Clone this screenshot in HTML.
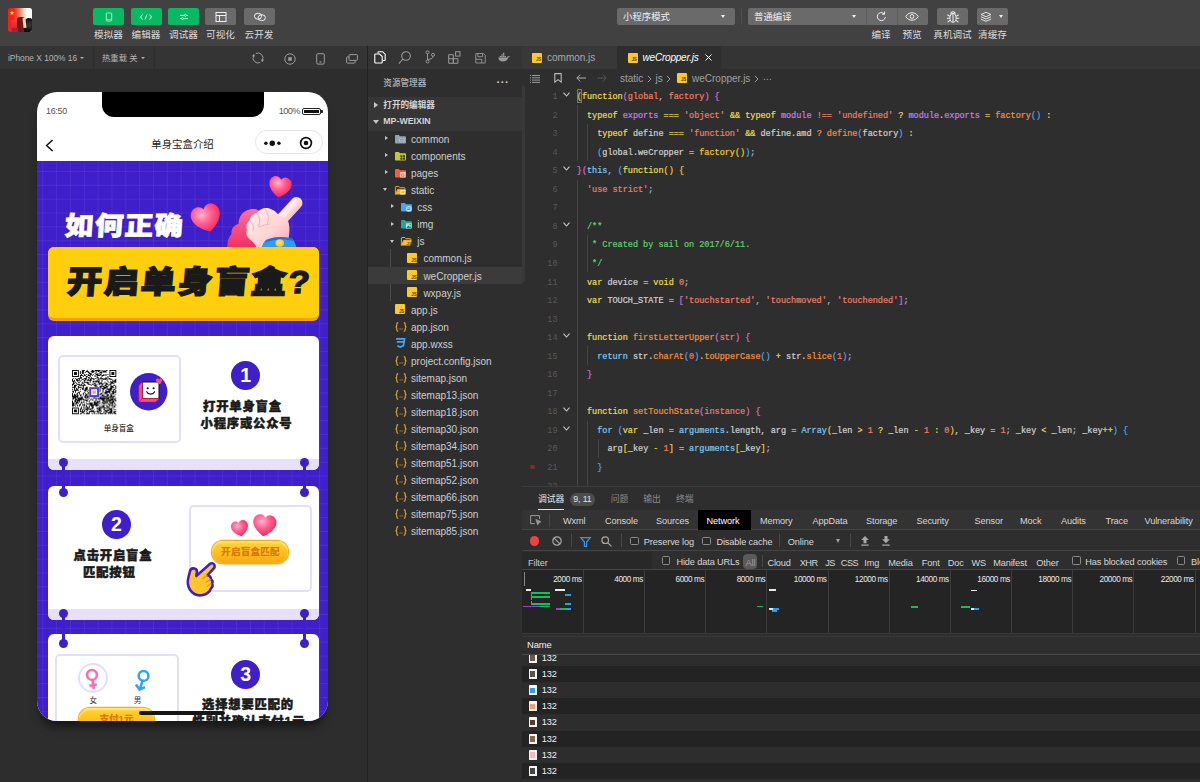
<!DOCTYPE html>
<html lang="zh-CN">
<head>
<meta charset="utf-8">
<title>微信开发者工具</title>
<style>
*{box-sizing:border-box;margin:0;padding:0}
html,body{width:1200px;height:782px;overflow:hidden;background:#2e2e2e}
body{position:relative;font-family:"Liberation Sans","Noto Sans CJK SC",sans-serif;color:#ccc;font-size:10px;-webkit-font-smoothing:antialiased}
.abs{position:absolute}
svg{display:block;overflow:visible}
/* ---------- top toolbar ---------- */
#top{left:0;top:0;width:1200px;height:46px;background:#414141}
.tb{position:absolute;top:8px;height:17px;width:31px;border-radius:2px;background:#09b863}
.tb.g{background:#6a6a6a}
.tb svg{position:absolute;left:50%;top:50%;transform:translate(-50%,-50%)}
.tl{position:absolute;top:28px;width:60px;margin-left:-30px;text-align:center;font-size:9.6px;line-height:13px;color:#dcdcdc;white-space:nowrap}
.sel{position:absolute;top:8px;height:17px;background:#6a6a6a;border-radius:2px;color:#f0f0f0;font-size:9.4px;line-height:17px;padding-left:6px}
.sel i{position:absolute;right:10px;top:7px;border:2.5px solid transparent;border-top:3px solid #eee;border-bottom:0}
/* ---------- simulator ---------- */
#simbar{left:0;top:46px;width:367px;height:23px;background:#343434}
#simbody{left:0;top:69px;width:367px;height:713px;background:#2d2d2d}
#vsplit{left:367px;top:46px;width:1px;height:736px;background:#222}
.st{position:absolute;top:.6px;height:23px;line-height:23px;font-size:8.350px;color:#b4b4b4;white-space:nowrap}
.st i{display:inline-block;vertical-align:middle;margin-left:3px;margin-top:-1px;border:2px solid transparent;border-top:2.800px solid #b4b4b4;border-bottom:0}

/* ---------- phone ---------- */
#phone{left:37px;top:92px;width:291px;height:628.600px;border-radius:20px;background:#fff;overflow:hidden;box-shadow:0 9px 10px -3px rgba(0,0,0,.5)}
#phone .cj{font-family:"Liberation Sans","Noto Sans CJK SC",sans-serif}
#poster{left:0;top:68.500px;width:291px;height:560px;background-color:#3f1fc9;background-image:linear-gradient(90deg,rgba(120,100,235,.2) 1px,transparent 1px),linear-gradient(180deg,rgba(120,100,235,.2) 1px,transparent 1px);background-size:13.850px 13.850px;background-position:5.250px 10px;overflow:hidden}
.hv{font-family:"Liberation Sans","Noto Sans CJK SC",sans-serif;font-weight:900;white-space:nowrap;position:absolute;line-height:1}
.card{position:absolute;left:11.400px;width:270.400px;height:134px;background:#fff;border-radius:6px;overflow:hidden}
.card:after{content:"";position:absolute;left:0;right:0;bottom:0;height:11px;background:#e6e0fb}
.frame{position:absolute;border:2.600px solid #e4defc;border-radius:5px;background:#fff}
.num{position:absolute;width:29px;height:29px;border-radius:50%;background:#3f1fc9;color:#fff;text-align:center;font:900 19.500px/29px "Liberation Sans","Noto Sans CJK SC",sans-serif}
.pin{position:absolute;width:9px;height:9px;border-radius:50%;background:#3f1fc9}
.pinl{position:absolute;width:3px;background:#3f1fc9}
.ybtn{position:absolute;border-radius:13px;background:linear-gradient(180deg,#ffd23c 0%,#ffc31f 45%,#f8a915 100%);box-shadow:0 0 0 1.200px #f7ad1c,0 1.500px 2px rgba(245,166,35,.55),inset 0 2px 1.500px rgba(255,236,140,.8);color:#d9780f;text-align:center}
/* ---------- explorer ---------- */
#actbar{left:368px;top:46px;width:154px;height:23px;background:#343434}
#explorer{left:368px;top:69px;width:154px;height:713px;background:#2e2e2e}

.row{position:absolute;left:0;width:154px;height:17.040px;line-height:17.040px;font-size:10px;color:#cfcfcf;white-space:nowrap}
.row .tw{position:absolute;top:6px;width:0;height:0}
.tw.r{border:2.800px solid transparent;border-left:3.900px solid #c5c5c5;border-right:0;margin-top:-.2px}
.tw.d{border:2.800px solid transparent;border-top:3.900px solid #c5c5c5;border-bottom:0;top:6.800px!important;margin-left:-.2px}
.row .ic{position:absolute;top:4px}
.row .tx{position:absolute;top:.7px}
.jsi{position:absolute;width:10px;height:10px;background:#ffca28;border-radius:1px}
.jsi:after{content:"JS";position:absolute;right:.8px;bottom:.6px;font:700 4.600px/5px "Liberation Sans",sans-serif;color:#5a4500;letter-spacing:-.2px}
.jsn{position:absolute;font:700 9px/10px "Liberation Mono",monospace;color:#f9a825;letter-spacing:-1.500px;white-space:nowrap}
.hdr{position:absolute;left:0;width:154px;height:17px;background:#363636;font-size:8.600px;font-weight:700;color:#d4d4d4;line-height:17px}
/* ---------- editor ---------- */
#tabs{left:522px;top:46px;width:678px;height:23px;background:#343434}
#editor{left:522px;top:69px;width:678px;height:417px;background:#2e2e2e;overflow:hidden}

.tab{position:absolute;top:0;height:23px;font-size:10px;line-height:22px;white-space:nowrap}
.bc{position:absolute;top:3.700px;font-size:10px;line-height:12px;color:#a0a0a0;white-space:nowrap}
.ln{position:absolute;left:0;width:35.500px;text-align:right;font:8.510px/18.550px "Liberation Mono",monospace;color:#585858;margin-top:1.300px}
.cl{-webkit-text-stroke:.22px;margin-top:1.300px;position:absolute;left:54.800px;white-space:pre;font:8.510px/18.550px "Liberation Mono",monospace;color:#d4d4d4;height:18.550px}
.cv{position:absolute;left:40.500px;width:7px;height:5px}
.ig{position:absolute;width:1px;background:#444}
.y{color:#e8dc50}.o{color:#d8c840}.s{color:#f07c60}.p{color:#c77dea}.b{color:#5fb4f0}.g{color:#d0d0d0}.f{color:#f2903e}.t{color:#7cc8f4}.c{color:#5fd068}.by{color:#f0c830}.bp{color:#d070d8}.bb{color:#4aa8f0}.sc{color:#9fb4c8}
/* ---------- debugger ---------- */
#dbg{left:522px;top:486px;width:678px;height:296px;background:#2e2e2e;overflow:hidden;border-top:1px solid #3c3c3c}
#dbg .t{position:absolute;white-space:nowrap;font-size:9.200px;line-height:12px;color:#d8d8d8;letter-spacing:-.12px}
#dbg .cb{position:absolute;width:8.500px;height:8.500px;border:1px solid #8a8a8a;border-radius:1.500px;background:#2a2a2a}
#dbg .vd{position:absolute;width:1px;background:#484848}
.nr{position:absolute;left:0;width:678px;height:16.150px}
.nr i{position:absolute;left:6.500px;top:3px;width:8px;height:10px;background:#f4f4f4;border-radius:.5px}
.nr i:after{content:"";position:absolute;left:1.500px;top:2.500px;width:5px;height:5.500px;background:var(--c,#555)}
.nr span{position:absolute;left:19.800px;top:2px;font-size:9.200px;line-height:12px;color:#f0f0f0;letter-spacing:-.1px}
.bar{position:absolute;height:1.900px;margin-top:-.25px}
</style>
</head>
<body>
<!-- TOP TOOLBAR -->
<div id="top" class="abs">
  <div id="avatar" class="abs" style="left:8px;top:8px;width:24px;height:23.500px;border-radius:2.500px;overflow:hidden;background:#f0221c">
    <div class="abs" style="left:0;top:0;width:24px;height:24px;background:linear-gradient(90deg,rgba(240,34,28,0) 22%,rgba(236,120,90,.9) 45%,#e8c8a8 62%,#ffffff 78%)"></div>
    <div class="abs" style="left:3px;top:12px;width:10px;height:12px;background:linear-gradient(180deg,rgba(248,60,50,.9),rgba(200,30,40,.95))"></div>
    <div class="abs" style="left:8.500px;top:9px;width:8px;height:15px;background:#6e1a18;border-radius:3px 3px 0 0"></div>
    <div class="abs" style="left:3.500px;top:20px;width:6px;height:4px;background:#b0202a"></div>
    <div class="abs" style="left:16px;top:9.500px;width:9px;height:15px;background:radial-gradient(circle at 60% 45%,#3a3a3a 0,#0c0c0c 70%);border-radius:5px 4px 0 0"></div>
    <div class="abs" style="left:15px;top:10px;width:2.500px;height:10px;background:#ead9b8;transform:rotate(-6deg)"></div>
    <div class="abs" style="left:1.500px;top:1.500px;font-size:5px;line-height:5px;color:#f8d838">&#9733;</div>
  </div>
  <!-- left buttons -->
  <div class="tb" style="left:93px"><svg width="7" height="9.300" viewBox="0 0 9 12" fill="none" stroke="#d6f5e3" stroke-width="1"><rect x="1" y="0.8" width="7" height="10.4" rx="1"/><path d="M1 9.2h7" stroke-width=".7"/></svg></div>
  <div class="tb" style="left:130.600px"><svg width="13" height="7" viewBox="0 0 13 7" fill="none" stroke="#d6f5e3" stroke-width="1"><path d="M3 1L1 3.5 3 6M10 1l2 2.5L10 6M7.5 1l-2 5"/></svg></div>
  <div class="tb" style="left:168px"><svg width="8.500" height="7.200" viewBox="0 0 10 9" fill="none" stroke="#d6f5e3" stroke-width="1"><path d="M0 2.5h5.5M8 2.5h2M0 6.5h2M4.5 6.5H10"/><circle cx="6.7" cy="2.5" r="1.2"/><circle cx="3.2" cy="6.5" r="1.2"/></svg></div>
  <div class="tb g" style="left:205px"><svg width="11" height="10" viewBox="0 0 11 10" fill="none" stroke="#f0f0f0" stroke-width="1"><rect x=".5" y=".5" width="10" height="9"/><path d="M.5 3.5h10M4 3.5v6"/></svg></div>
  <div class="tb g" style="left:244px"><svg width="13" height="9" viewBox="0 0 13 9" fill="none" stroke="#f0f0f0" stroke-width="1"><ellipse cx="4.5" cy="3.7" rx="3.6" ry="3"/><ellipse cx="8.3" cy="5.2" rx="3.6" ry="3"/></svg></div>
  <div class="tl" style="left:108.5px">模拟器</div>
  <div class="tl" style="left:146px">编辑器</div>
  <div class="tl" style="left:183.5px">调试器</div>
  <div class="tl" style="left:220.5px">可视化</div>
  <div class="tl" style="left:259px">云开发</div>
  <!-- center selects -->
  <div class="sel" style="left:617px;width:118px">小程序模式<i></i></div>
  <div class="abs" style="left:741px;top:9px;width:1px;height:16px;background:#4e4e4e"></div>
  <div class="sel" style="left:748px;width:180px">普通编译<i style="right:72.500px"></i>
    <div class="abs" style="left:118px;top:0;width:1px;height:17px;background:#5e5e5e"></div>
    <div class="abs" style="left:149px;top:0;width:1px;height:17px;background:#5e5e5e"></div>
    <svg class="abs" style="left:128px;top:3px" width="11" height="11" viewBox="0 0 11 11" fill="none" stroke="#f0f0f0" stroke-width="1"><path d="M9.3 6.2A4 4 0 1 1 8 2.6"/><path d="M8.6 .6v2.6H6" /></svg>
    <svg class="abs" style="left:157px;top:4px" width="14" height="9" viewBox="0 0 14 9" fill="none" stroke="#f0f0f0" stroke-width="1"><path d="M.8 4.5C2.5 1.8 4.6.8 7 .8s4.5 1 6.2 3.7C11.500 7.200 9.400 8.200 7 8.200S2.500 7.200.8 4.500z"/><circle cx="7" cy="4.500" r="1.900"/></svg>
  </div>
  <div class="tb g" style="left:937px"><svg width="14.500" height="13.400" viewBox="0 0 13 12" fill="none" stroke="#f0f0f0" stroke-width=".9"><ellipse cx="6.5" cy="6.800" rx="2.800" ry="3.900"/><path d="M4.600 3.300a1.900 1.900 0 0 1 3.800 0M6.500 3.300v7.400M3.700 5.500L1.500 4M3.700 7.200H1M3.800 9l-2.200 1.600M9.300 5.500L11.500 4M9.300 7.200H12M9.200 9l2.200 1.600"/></svg></div>
  <div class="tb g" style="left:977px"><svg class="abs" style="left:9px!important;top:8.5px!important" width="12" height="11" viewBox="0 0 12 11" fill="none" stroke="#f0f0f0" stroke-width=".9"><path d="M6 .8L11 3 6 5.200 1 3z"/><path d="M1 5.300l5 2.200 5-2.200M1 7.600l5 2.200 5-2.200"/></svg><i class="abs" style="right:5.200px;top:7.300px;border:2.500px solid transparent;border-top:3px solid #eee;border-bottom:0"></i></div>
  <div class="tl" style="left:881px">编译</div>
  <div class="tl" style="left:912px">预览</div>
  <div class="tl" style="left:952.5px">真机调试</div>
  <div class="tl" style="left:992.5px">清缓存</div>
</div>
<!-- SIMULATOR -->
<div id="simbar" class="abs">
  <div class="st" style="left:8px">iPhone X 100% 16<i></i></div>
  <div class="abs" style="left:93px;top:0;width:1px;height:23px;background:#2c2c2c"></div>
  <div class="st" style="left:102px">热重载 关<i></i></div>
  <div class="abs" style="left:154px;top:0;width:1px;height:23px;background:#2c2c2c"></div>
  <svg class="abs" style="left:252.400px;top:6.300px" width="12" height="12" viewBox="0 0 12 12" fill="none" stroke="#9c9c9c" stroke-width="1"><path d="M3.890 1.470A5 5 0 0 1 10.530 8.110M8.110 10.530A5 5 0 0 1 1.470 3.890"/><path d="M8.800 7.400l3.200.4-1.800 2.500zM3.200 4.600L0 4.200l1.800-2.500z" fill="#9c9c9c" stroke="none"/></svg>
  <svg class="abs" style="left:283.500px;top:6.700px" width="12" height="12" viewBox="0 0 12 12" fill="none" stroke="#9c9c9c" stroke-width="1"><circle cx="6" cy="6" r="5.200"/><rect x="4.200" y="4.200" width="3.600" height="3.600" fill="#9c9c9c" stroke="none"/></svg>
  <svg class="abs" style="left:316px;top:6.500px" width="9" height="12" viewBox="0 0 9 12" fill="none" stroke="#9c9c9c" stroke-width="1"><rect x=".7" y=".7" width="7.600" height="10.400" rx="1.200"/><path d="M3.500 9h2" stroke-width="1.200"/></svg>
  <svg class="abs" style="left:345.500px;top:7.500px" width="12" height="10" viewBox="0 0 12 10" fill="none" stroke="#9c9c9c" stroke-width="1"><rect x="3" y=".6" width="8.400" height="5.800" rx=".8"/><path d="M3 2.900H1.400a.8.800 0 0 0-.8.800v4.600a.8.800 0 0 0 .8.800h6.800a.8.800 0 0 0 .8-.8V6.400"/></svg>
</div>
<div id="simbody" class="abs"></div>
<div id="phone" class="abs">
  <!-- status bar -->
  <div class="abs" style="left:64.800px;top:0;width:162.600px;height:24.800px;background:#000;border-radius:0 0 12px 12px"></div>
  <div class="abs" style="left:9px;top:12.800px;font-size:8.900px;line-height:12px;color:#555;letter-spacing:-.25px">16:50</div>
  <div class="abs" style="left:241.700px;top:13px;font-size:9.200px;line-height:12px;color:#555;letter-spacing:-.55px">100%</div>
  <div class="abs" style="left:265.300px;top:15.600px;width:18.600px;height:7.400px;border:1px solid #222;border-radius:2px"><div class="abs" style="left:1px;top:1px;right:1px;bottom:1px;background:#111;border-radius:.5px"></div></div>
  <div class="abs" style="left:284px;top:18px;width:1.600px;height:2.600px;background:#222;border-radius:0 1px 1px 0"></div>
  <!-- nav bar -->
  <svg class="abs" style="left:8px;top:47px" width="9" height="13" viewBox="0 0 9 13" fill="none" stroke="#111" stroke-width="1.500"><path d="M7.600 1L1.600 6.500l6 5.500"/></svg>
  <div class="abs cj" style="left:0;width:291px;top:46px;text-align:center;font-size:10.400px;line-height:14px;color:#222">单身宝盒介绍</div>
  <div class="abs" style="left:218.200px;top:37.600px;width:67.500px;height:24.800px;border:1px solid #e6e6e6;border-radius:13px;background:#fff">
    <svg class="abs" style="left:8px;top:8px" width="52" height="8" viewBox="0 0 52 8"><circle cx="8.300" cy="4.300" r="2.700" fill="#111"/><circle cx="1.900" cy="4.300" r="1.750" fill="#111"/><circle cx="14.900" cy="4.300" r="1.750" fill="#111"/></svg>
    <svg class="abs" style="left:42.500px;top:5px" width="14" height="14" viewBox="0 0 14 14"><circle cx="7" cy="7" r="5.400" fill="none" stroke="#111" stroke-width="1.700"/><circle cx="7" cy="7" r="2.300" fill="#111"/></svg>
  </div>
  <!-- poster -->
  <div id="poster" class="abs">
    <svg width="0" height="0" style="position:absolute"><defs>
<radialGradient id="hg" cx="38%" cy="32%" r="75%"><stop offset="0" stop-color="#ffb3cf"/><stop offset=".45" stop-color="#ff5c8f"/><stop offset="1" stop-color="#f0204f"/></radialGradient>
<linearGradient id="skin" x1="0" y1="0" x2="1" y2="1"><stop offset="0" stop-color="#fff1ee"/><stop offset=".6" stop-color="#ffd2d2"/><stop offset="1" stop-color="#f79cae"/></linearGradient>
<linearGradient id="blob" x1="0" y1="0" x2="0" y2="1"><stop offset="0" stop-color="#ff6f9c"/><stop offset="1" stop-color="#f02e63"/></linearGradient>
<path id="hp" d="M12 21.800C10 21 .6 15.200.6 7.800.6 3.700 3.600.8 7.100.8 9.200.8 11 1.900 12 3.700 13 1.900 14.800.8 16.900.8c3.500 0 6.500 2.900 6.500 7 0 7.400-9.400 13.200-11.400 14z"/>
</defs></svg>
    <svg class="abs" style="left:230.7px;top:15.5px;transform:rotate(9deg)" width="24" height="22" viewBox="0 0 24 22.500"><use href="#hp" fill="url(#hg)"/></svg>
    <svg class="abs" style="left:154px;top:43.0px;transform:rotate(-17deg)" width="31" height="29" viewBox="0 0 24 22.500"><use href="#hp" fill="url(#hg)"/></svg>
    <!-- hand illustration -->
    <svg class="abs" style="left:187px;top:33.5px" width="84" height="56" viewBox="0 0 84 56">
      <path d="M3.500 54.500C3 48 4.500 43 7.500 40c-.5-5 2.500-9 7-10 0-6 3-11 8-13.500 5-2.500 11-2 14 1.500l3 36.500z" fill="url(#blob)"/>
      <path d="M56 27L72.500 9" stroke="url(#skin)" stroke-width="12" stroke-linecap="round" fill="none"/>
      <path d="M56 27L72.500 9" stroke="#fff" stroke-opacity=".4" stroke-width="5.500" stroke-linecap="round" fill="none" transform="translate(-1.500,-1)"/>
      <path d="M25.500 45c-3-2-4-6-2.500-9-1.500-3.500-.5-7.500 2.500-9.500.5-4 3.500-7 7.500-7.500 2.500-4 8-6 12.500-4.500 4 1.300 7 3.500 9 6.500l8 2.500c3 5 3.500 12 2.500 18l-2 13H33c-1-3-3-6-7.500-9.500z" fill="url(#skin)"/>
      <path d="M33 19c3 3.500 3.500 9 1.500 13M41.500 15.500c3 4 3.500 10 2 14.500M26 27c3 2 4 6 3 9.500M35 33c3-1.500 7-2.500 10.500-3" stroke="#f4a9b6" stroke-width=".9" fill="none" stroke-linecap="round"/>
      <path d="M37.500 54.500c.5-3.500 2-6.500 4.500-8.500 8-3.500 17-4 26-1.500 2.500 2.500 4 6 4.500 10z" fill="#2f9bf2"/>
      <path d="M42 46c8-3.500 17-4 26-1.500l1.500 2.500c-9-2.500-19-2-28.500 1.500z" fill="#1b72d8"/>
      <ellipse cx="55.700" cy="49" rx="4.300" ry="3.700" fill="#f8c63a"/><ellipse cx="55.400" cy="48.400" rx="2.800" ry="2.200" fill="#ffd95c"/>
    </svg>
    <div class="hv" style="left:28px;top:52.8px;font-size:26px;color:#fff;letter-spacing:1.100px;transform-origin:0 50%;transform:skewX(-4deg) scaleX(1.1);-webkit-text-stroke:.8px #fff">如何正确</div>
    <div class="abs" style="left:11.4px;top:86.8px;width:270.400px;height:73.400px;border-radius:6px;background:#f5a011"></div>
    <div class="abs" style="left:11.4px;top:86.8px;width:270.400px;height:70.400px;border-radius:6px;background:#ffcf0d"></div>
    <div class="hv" style="left:29.5px;top:106.5px;font-size:31.500px;color:#1a1a1a;letter-spacing:1.400px;transform-origin:0 50%;transform:skewX(-5deg) scaleX(1.12);-webkit-text-stroke:1.300px #1a1a1a">开启单身盲盒?</div>

    
    <div class="card" style="top:175.5px">
      <div class="frame" style="left:9.4px;top:18.7px;width:123.200px;height:88.800px"></div>
      <svg class="abs" style="left:23.3px;top:34.2px" width="44.300" height="44.300" viewBox="0 0 45 45"><path d="M0 0h7v1h-7zM10 0h3v1h-3zM15 0h1v1h-1zM20 0h2v1h-2zM23 0h6v1h-6zM30 0h1v1h-1zM32 0h1v1h-1zM34 0h2v1h-2zM38 0h7v1h-7zM0 1h1v1h-1zM6 1h1v1h-1zM8 1h1v1h-1zM10 1h2v1h-2zM14 1h3v1h-3zM19 1h4v1h-4zM24 1h1v1h-1zM26 1h2v1h-2zM29 1h1v1h-1zM31 1h4v1h-4zM38 1h1v1h-1zM44 1h1v1h-1zM0 2h1v1h-1zM2 2h3v1h-3zM6 2h1v1h-1zM8 2h1v1h-1zM10 2h2v1h-2zM13 2h1v1h-1zM16 2h2v1h-2zM20 2h2v1h-2zM24 2h1v1h-1zM28 2h3v1h-3zM32 2h1v1h-1zM34 2h1v1h-1zM38 2h1v1h-1zM40 2h3v1h-3zM44 2h1v1h-1zM0 3h1v1h-1zM2 3h3v1h-3zM6 3h1v1h-1zM8 3h1v1h-1zM10 3h2v1h-2zM17 3h3v1h-3zM23 3h1v1h-1zM25 3h1v1h-1zM27 3h1v1h-1zM29 3h1v1h-1zM38 3h1v1h-1zM40 3h3v1h-3zM44 3h1v1h-1zM0 4h1v1h-1zM2 4h3v1h-3zM6 4h1v1h-1zM9 4h1v1h-1zM12 4h1v1h-1zM14 4h1v1h-1zM16 4h1v1h-1zM18 4h2v1h-2zM21 4h1v1h-1zM24 4h3v1h-3zM28 4h2v1h-2zM32 4h1v1h-1zM34 4h1v1h-1zM36 4h1v1h-1zM38 4h1v1h-1zM40 4h3v1h-3zM44 4h1v1h-1zM0 5h1v1h-1zM6 5h1v1h-1zM8 5h3v1h-3zM12 5h2v1h-2zM16 5h3v1h-3zM20 5h1v1h-1zM23 5h1v1h-1zM25 5h4v1h-4zM30 5h3v1h-3zM34 5h1v1h-1zM38 5h1v1h-1zM44 5h1v1h-1zM0 6h7v1h-7zM8 6h1v1h-1zM11 6h1v1h-1zM14 6h2v1h-2zM18 6h1v1h-1zM23 6h1v1h-1zM25 6h1v1h-1zM30 6h1v1h-1zM36 6h1v1h-1zM38 6h7v1h-7zM8 7h2v1h-2zM14 7h1v1h-1zM16 7h2v1h-2zM19 7h1v1h-1zM25 7h2v1h-2zM29 7h1v1h-1zM34 7h1v1h-1zM36 7h1v1h-1zM1 8h1v1h-1zM3 8h1v1h-1zM6 8h4v1h-4zM12 8h3v1h-3zM17 8h1v1h-1zM19 8h3v1h-3zM23 8h2v1h-2zM26 8h1v1h-1zM28 8h4v1h-4zM33 8h3v1h-3zM37 8h2v1h-2zM0 9h1v1h-1zM4 9h2v1h-2zM7 9h1v1h-1zM10 9h2v1h-2zM13 9h2v1h-2zM16 9h1v1h-1zM18 9h2v1h-2zM21 9h2v1h-2zM26 9h2v1h-2zM29 9h1v1h-1zM31 9h4v1h-4zM36 9h1v1h-1zM38 9h3v1h-3zM44 9h1v1h-1zM0 10h1v1h-1zM2 10h1v1h-1zM4 10h4v1h-4zM9 10h1v1h-1zM12 10h2v1h-2zM15 10h5v1h-5zM25 10h1v1h-1zM27 10h1v1h-1zM30 10h1v1h-1zM35 10h1v1h-1zM41 10h1v1h-1zM43 10h2v1h-2zM0 11h3v1h-3zM5 11h1v1h-1zM8 11h1v1h-1zM12 11h1v1h-1zM18 11h1v1h-1zM21 11h7v1h-7zM30 11h1v1h-1zM36 11h1v1h-1zM39 11h1v1h-1zM41 11h4v1h-4zM1 12h1v1h-1zM3 12h1v1h-1zM6 12h2v1h-2zM10 12h1v1h-1zM12 12h5v1h-5zM18 12h1v1h-1zM21 12h1v1h-1zM24 12h1v1h-1zM26 12h2v1h-2zM29 12h1v1h-1zM33 12h1v1h-1zM37 12h1v1h-1zM39 12h3v1h-3zM43 12h2v1h-2zM1 13h2v1h-2zM4 13h1v1h-1zM10 13h2v1h-2zM15 13h2v1h-2zM22 13h2v1h-2zM27 13h4v1h-4zM32 13h1v1h-1zM34 13h2v1h-2zM39 13h4v1h-4zM0 14h2v1h-2zM5 14h3v1h-3zM9 14h1v1h-1zM12 14h1v1h-1zM16 14h3v1h-3zM20 14h2v1h-2zM23 14h1v1h-1zM25 14h1v1h-1zM27 14h2v1h-2zM30 14h2v1h-2zM34 14h3v1h-3zM38 14h2v1h-2zM0 15h1v1h-1zM2 15h3v1h-3zM7 15h7v1h-7zM19 15h1v1h-1zM22 15h3v1h-3zM30 15h1v1h-1zM33 15h2v1h-2zM37 15h1v1h-1zM39 15h1v1h-1zM42 15h2v1h-2zM2 16h2v1h-2zM6 16h1v1h-1zM11 16h1v1h-1zM23 16h3v1h-3zM28 16h5v1h-5zM34 16h3v1h-3zM39 16h3v1h-3zM44 16h1v1h-1zM0 17h4v1h-4zM6 17h4v1h-4zM11 17h1v1h-1zM14 17h2v1h-2zM28 17h2v1h-2zM32 17h4v1h-4zM39 17h4v1h-4zM44 17h1v1h-1zM2 18h1v1h-1zM4 18h1v1h-1zM6 18h1v1h-1zM10 18h2v1h-2zM13 18h3v1h-3zM28 18h1v1h-1zM30 18h5v1h-5zM36 18h1v1h-1zM38 18h3v1h-3zM44 18h1v1h-1zM0 19h1v1h-1zM2 19h1v1h-1zM4 19h2v1h-2zM8 19h1v1h-1zM10 19h2v1h-2zM13 19h3v1h-3zM28 19h1v1h-1zM31 19h2v1h-2zM35 19h6v1h-6zM42 19h2v1h-2zM2 20h5v1h-5zM12 20h3v1h-3zM16 20h1v1h-1zM28 20h1v1h-1zM31 20h1v1h-1zM34 20h1v1h-1zM37 20h3v1h-3zM42 20h1v1h-1zM44 20h1v1h-1zM0 21h2v1h-2zM3 21h1v1h-1zM8 21h1v1h-1zM13 21h1v1h-1zM15 21h1v1h-1zM28 21h1v1h-1zM31 21h1v1h-1zM34 21h5v1h-5zM40 21h3v1h-3zM44 21h1v1h-1zM1 22h1v1h-1zM3 22h1v1h-1zM6 22h2v1h-2zM12 22h1v1h-1zM16 22h1v1h-1zM31 22h1v1h-1zM33 22h6v1h-6zM41 22h4v1h-4zM0 23h1v1h-1zM5 23h1v1h-1zM7 23h1v1h-1zM11 23h1v1h-1zM13 23h1v1h-1zM16 23h1v1h-1zM29 23h2v1h-2zM33 23h3v1h-3zM38 23h1v1h-1zM40 23h3v1h-3zM0 24h1v1h-1zM2 24h1v1h-1zM4 24h2v1h-2zM7 24h1v1h-1zM11 24h1v1h-1zM14 24h3v1h-3zM28 24h2v1h-2zM32 24h1v1h-1zM34 24h1v1h-1zM36 24h1v1h-1zM39 24h1v1h-1zM41 24h2v1h-2zM44 24h1v1h-1zM0 25h1v1h-1zM2 25h2v1h-2zM5 25h1v1h-1zM8 25h2v1h-2zM11 25h1v1h-1zM13 25h2v1h-2zM28 25h1v1h-1zM30 25h2v1h-2zM35 25h3v1h-3zM39 25h2v1h-2zM0 26h7v1h-7zM8 26h1v1h-1zM13 26h4v1h-4zM30 26h4v1h-4zM35 26h2v1h-2zM39 26h2v1h-2zM42 26h2v1h-2zM0 27h6v1h-6zM9 27h2v1h-2zM12 27h2v1h-2zM15 27h2v1h-2zM28 27h2v1h-2zM31 27h1v1h-1zM33 27h3v1h-3zM37 27h6v1h-6zM1 28h3v1h-3zM5 28h6v1h-6zM13 28h3v1h-3zM17 28h1v1h-1zM21 28h4v1h-4zM26 28h1v1h-1zM28 28h6v1h-6zM35 28h3v1h-3zM39 28h1v1h-1zM41 28h1v1h-1zM44 28h1v1h-1zM0 29h2v1h-2zM3 29h2v1h-2zM6 29h6v1h-6zM16 29h1v1h-1zM19 29h1v1h-1zM24 29h1v1h-1zM26 29h12v1h-12zM39 29h5v1h-5zM3 30h7v1h-7zM11 30h5v1h-5zM18 30h1v1h-1zM20 30h2v1h-2zM24 30h1v1h-1zM30 30h3v1h-3zM35 30h1v1h-1zM37 30h5v1h-5zM43 30h2v1h-2zM0 31h1v1h-1zM2 31h2v1h-2zM5 31h3v1h-3zM14 31h2v1h-2zM17 31h1v1h-1zM23 31h1v1h-1zM25 31h1v1h-1zM27 31h2v1h-2zM31 31h9v1h-9zM41 31h2v1h-2zM44 31h1v1h-1zM0 32h1v1h-1zM3 32h3v1h-3zM7 32h1v1h-1zM9 32h1v1h-1zM11 32h2v1h-2zM17 32h1v1h-1zM22 32h2v1h-2zM25 32h3v1h-3zM31 32h1v1h-1zM33 32h1v1h-1zM35 32h1v1h-1zM38 32h1v1h-1zM40 32h3v1h-3zM0 33h3v1h-3zM4 33h3v1h-3zM9 33h2v1h-2zM14 33h1v1h-1zM18 33h3v1h-3zM22 33h5v1h-5zM28 33h1v1h-1zM30 33h7v1h-7zM38 33h4v1h-4zM43 33h1v1h-1zM0 34h2v1h-2zM3 34h2v1h-2zM8 34h1v1h-1zM12 34h1v1h-1zM15 34h6v1h-6zM22 34h4v1h-4zM27 34h1v1h-1zM32 34h1v1h-1zM37 34h1v1h-1zM39 34h1v1h-1zM41 34h1v1h-1zM43 34h1v1h-1zM0 35h3v1h-3zM5 35h1v1h-1zM7 35h2v1h-2zM10 35h3v1h-3zM14 35h1v1h-1zM18 35h9v1h-9zM29 35h1v1h-1zM31 35h1v1h-1zM33 35h1v1h-1zM35 35h1v1h-1zM37 35h2v1h-2zM40 35h2v1h-2zM44 35h1v1h-1zM0 36h2v1h-2zM3 36h1v1h-1zM5 36h1v1h-1zM7 36h1v1h-1zM12 36h1v1h-1zM14 36h1v1h-1zM17 36h1v1h-1zM19 36h3v1h-3zM24 36h2v1h-2zM27 36h1v1h-1zM31 36h2v1h-2zM35 36h1v1h-1zM38 36h1v1h-1zM40 36h1v1h-1zM42 36h2v1h-2zM9 37h1v1h-1zM11 37h1v1h-1zM14 37h2v1h-2zM17 37h1v1h-1zM20 37h2v1h-2zM28 37h5v1h-5zM35 37h3v1h-3zM41 37h1v1h-1zM43 37h1v1h-1zM0 38h7v1h-7zM9 38h1v1h-1zM12 38h2v1h-2zM15 38h3v1h-3zM20 38h2v1h-2zM25 38h4v1h-4zM30 38h1v1h-1zM32 38h3v1h-3zM36 38h1v1h-1zM38 38h1v1h-1zM40 38h1v1h-1zM42 38h1v1h-1zM0 39h1v1h-1zM6 39h1v1h-1zM8 39h2v1h-2zM11 39h1v1h-1zM14 39h3v1h-3zM18 39h3v1h-3zM25 39h1v1h-1zM27 39h3v1h-3zM32 39h1v1h-1zM35 39h1v1h-1zM37 39h4v1h-4zM0 40h1v1h-1zM2 40h3v1h-3zM6 40h1v1h-1zM8 40h1v1h-1zM10 40h1v1h-1zM12 40h4v1h-4zM17 40h2v1h-2zM22 40h1v1h-1zM26 40h3v1h-3zM32 40h2v1h-2zM36 40h1v1h-1zM38 40h3v1h-3zM42 40h3v1h-3zM0 41h1v1h-1zM2 41h3v1h-3zM6 41h1v1h-1zM8 41h1v1h-1zM10 41h1v1h-1zM12 41h1v1h-1zM15 41h1v1h-1zM19 41h3v1h-3zM25 41h1v1h-1zM27 41h3v1h-3zM33 41h5v1h-5zM39 41h2v1h-2zM0 42h1v1h-1zM2 42h3v1h-3zM6 42h1v1h-1zM8 42h5v1h-5zM14 42h1v1h-1zM17 42h7v1h-7zM25 42h3v1h-3zM29 42h1v1h-1zM32 42h1v1h-1zM34 42h2v1h-2zM38 42h3v1h-3zM42 42h3v1h-3zM0 43h1v1h-1zM6 43h1v1h-1zM10 43h2v1h-2zM15 43h1v1h-1zM17 43h1v1h-1zM22 43h1v1h-1zM26 43h1v1h-1zM28 43h1v1h-1zM32 43h1v1h-1zM34 43h1v1h-1zM36 43h5v1h-5zM42 43h2v1h-2zM0 44h7v1h-7zM8 44h2v1h-2zM12 44h1v1h-1zM14 44h4v1h-4zM20 44h1v1h-1zM22 44h1v1h-1zM24 44h1v1h-1zM26 44h1v1h-1zM28 44h4v1h-4zM33 44h2v1h-2zM37 44h1v1h-1zM39 44h1v1h-1zM41 44h1v1h-1zM43 44h2v1h-2z" fill="#111"/><rect x="17.500" y="17.500" width="10" height="10" fill="#5236dc"/><rect x="19.500" y="19.500" width="6" height="6" fill="#fff"/><rect x="20.800" y="20.800" width="3.400" height="3.400" fill="#f4a0a8"/></svg>
      <svg class="abs" style="left:81.4px;top:37.2px" width="37.400" height="37.400" viewBox="0 0 38 38">
        <circle cx="19" cy="19" r="19" fill="#3f1fc9"/>
        <path d="M11 12.500l3-3h15v15l-3 3z" fill="#ff4d79"/><path d="M8 12.500h18v15H8z" fill="#ff4d79" opacity="0"/>
        <rect x="12.500" y="9" width="17" height="17" rx="1" fill="#fff" stroke="#111" stroke-width="1.100"/>
        <path d="M9 13l3.500-4v17L9 29.500zM9 29.500l3.500-3.500h17L26 29.500z" fill="#ff4d79" stroke="#c9184a" stroke-width=".5"/>
        <circle cx="18" cy="15.500" r="1.100" fill="#111"/><circle cx="24" cy="15.500" r="1.100" fill="#111"/>
        <path d="M17 19c1.500 3.200 6.500 3.200 8 0" fill="none" stroke="#111" stroke-width="1.200" stroke-linecap="round"/>
        <path d="M30 6.500c-1.500-2-4.500-.5-3.500 2 .6 1.500 2.500 2.300 4 3 1-1.300 2.300-2.800 2-4.400-.4-2.200-2.400-2-2.500-.6z" fill="#ff4d79"/>
      </svg>
      <div class="abs cj" style="left:8.9px;width:123px;top:86.8px;text-align:center;font-size:7.500px;line-height:11px;color:#2a2a2a;letter-spacing:0;font-weight:500">单身盲盒</div>
      <div class="num" style="left:182.8px;top:25.0px">1</div>
      <div class="hv" style="left:154.6px;top:64px;font-size:12.300px;color:#1a1a1a;letter-spacing:.85px;-webkit-text-stroke:.5px #1a1a1a;margin-top:.7px">打开单身盲盒</div>
      <div class="hv" style="left:152.1px;top:81px;font-size:12.300px;color:#1a1a1a;letter-spacing:.85px;-webkit-text-stroke:.5px #1a1a1a;margin-top:.7px">小程序或公众号</div>
    </div>
    <div class="card" style="top:325.0px">
      <div class="num" style="left:53.5px;top:24.9px">2</div>
      <div class="hv" style="left:25.1px;top:64.0px;font-size:12.300px;color:#1a1a1a;letter-spacing:.85px;-webkit-text-stroke:.5px #1a1a1a;margin-top:.7px">点击开启盲盒</div>
      <div class="hv" style="left:34.6px;top:80.8px;font-size:12.300px;color:#1a1a1a;letter-spacing:.85px;-webkit-text-stroke:.5px #1a1a1a;margin-top:.7px">匹配按钮</div>
      <div class="frame" style="left:140.4px;top:19.5px;width:122.800px;height:87px"></div>
      <svg class="abs" style="left:182.6px;top:34.0px;transform:rotate(-12deg)" width="18" height="17" viewBox="0 0 24 22.500"><use href="#hp" fill="url(#hg)"/></svg>
      <svg class="abs" style="left:204.1px;top:28.5px;transform:rotate(6deg)" width="25" height="23" viewBox="0 0 24 22.500"><use href="#hp" fill="url(#hg)"/></svg>
      <div class="ybtn hv" style="left:164.1px;top:55.0px;width:76px;height:22px;line-height:22px;font-size:9.600px;letter-spacing:.2px">开启盲盒匹配</div>
      <svg class="abs" style="left:135.6px;top:74.5px" width="32" height="38" viewBox="0 0 32 38">
        <path d="M25.800 4c1.800-1.600 4.400-.6 4.800 1.600.2 1.200-.2 2.300-1 3.100l-6.200 6.600c2.400.2 3.800 2 3.600 4 1.400 1 1.800 2.900 1 4.400.9 1.500.5 3.400-.9 4.500C25.800 32 22.500 34.800 17.500 35.300c-4.600.5-8.800-1.500-11.300-5.300-2.400-3.600-3-8-1.800-12.500l1.500-6c.6-2.300 2.500-3.400 4.500-2.900 1.900.5 2.900 2.400 2.500 4.300l-.7 3.200z" fill="#ffc52a" stroke="#3f1fc9" stroke-width="2.600" stroke-linejoin="round"/>
        <path d="M23 15.500c-1.500.8-3 2-4 3.200M26.600 19.600c-1.800.5-3.300 1.500-4.600 2.800M27.500 24c-1.700.4-3.100 1.300-4.300 2.600" stroke="#e8960f" stroke-width="1.200" fill="none" stroke-linecap="round"/>
      </svg>
    </div>
    <div class="card" style="top:473.5px">
      <div class="frame" style="left:6.6px;top:19.7px;width:123.800px;height:88px"></div>
      <div class="abs" style="left:29.2px;top:28.8px;width:30.600px;height:30.600px;border-radius:50%;border:2.500px solid #e4defc;background:#fff"></div>
      <svg class="abs" style="left:36.8px;top:34.2px" width="15" height="22.500" viewBox="0 0 14 21" fill="none" stroke="#ff6cae" stroke-width="2.400"><circle cx="6.500" cy="6.500" r="4.600"/><path d="M7.200 11.200l1 8.300M4 16.500l7-1.200"/></svg>
      <svg class="abs" style="left:85.2px;top:35.2px" width="17" height="23.400" viewBox="0 0 16 22" fill="none" stroke="#2fa5f5" stroke-width="2.400"><circle cx="9" cy="6.500" r="4.600"/><path d="M8 11.200L5.500 19M1.800 14.500l3.500 5 5-2.500"/></svg>
      <div class="abs cj" style="left:41.1px;top:60.9px;font-size:7.600px;line-height:11px;color:#333">女</div>
      <div class="abs cj" style="left:85.4px;top:60.9px;font-size:7.600px;line-height:11px;color:#333">男</div>
      <div class="ybtn hv" style="left:30.6px;top:73.5px;width:75px;height:22px;line-height:21px;font-size:9.600px">支付1元</div>
      <div class="num" style="left:182.9px;top:25.5px">3</div>
      <div class="hv" style="left:153.6px;top:64.7px;font-size:12.300px;color:#1a1a1a;letter-spacing:.85px;-webkit-text-stroke:.5px #1a1a1a;margin-top:.7px">选择想要匹配的</div>
      <div class="hv" style="left:144.1px;top:81.5px;font-size:12.300px;color:#1a1a1a;letter-spacing:.85px;-webkit-text-stroke:.5px #1a1a1a;margin-top:.7px">性别并确认支付1元</div>
    </div>
    <div class="pinl" style="left:25.3px;top:301.8px;height:30.5px"></div><div class="pin" style="left:22.3px;top:297.3px"></div><div class="pin" style="left:22.3px;top:327.8px"></div><div class="pinl" style="left:265.5px;top:301.8px;height:30.5px"></div><div class="pin" style="left:262.5px;top:297.3px"></div><div class="pin" style="left:262.5px;top:327.8px"></div><div class="pinl" style="left:25.3px;top:452.5px;height:30px"></div><div class="pin" style="left:22.3px;top:448.0px"></div><div class="pin" style="left:22.3px;top:478.0px"></div><div class="pinl" style="left:265.5px;top:452.5px;height:30px"></div><div class="pin" style="left:262.5px;top:448.0px"></div><div class="pin" style="left:262.5px;top:478.0px"></div>
  </div>
  <!-- home indicator -->
  <div class="abs" style="left:102.400px;top:618.600px;width:86px;height:4.300px;border-radius:2.200px;background:#161616"></div>
</div>
<div id="vsplit" class="abs"></div>
<!-- EXPLORER -->
<div id="actbar" class="abs">
  <svg class="abs" style="left:5.600px;top:4.900px" width="12" height="13" viewBox="0 0 12 13" fill="none" stroke="#fff" stroke-width="1.100"><path d="M4 2.600V1.300c0-.3.300-.6.600-.6h4l2.600 2.600v5.600c0 .3-.3.600-.6.600H8.800"/><path d="M1.400 3h4.200l2.600 2.600v5.800c0 .3-.3.600-.6.600H1.400c-.3 0-.6-.3-.6-.6V3.600c0-.3.300-.6.600-.6z"/></svg>
  <svg class="abs" style="left:30.400px;top:4.700px" width="13" height="13" viewBox="0 0 13 13" fill="none" stroke="#9a9a9a" stroke-width="1.100"><circle cx="8" cy="5" r="4.300"/><path d="M5 8L.8 12.600"/></svg>
  <svg class="abs" style="left:56.700px;top:4.400px" width="10" height="14" viewBox="0 0 10 14" fill="none" stroke="#9a9a9a" stroke-width="1"><circle cx="2.500" cy="2.300" r="1.500"/><circle cx="2.500" cy="11.500" r="1.500"/><circle cx="8" cy="4.800" r="1.500"/><path d="M2.500 3.800V10M8 6.300c0 2-1.500 2.700-5.500 3.200"/></svg>
  <svg class="abs" style="left:80px;top:4.700px" width="13" height="13" viewBox="0 0 13 13" fill="none" stroke="#9a9a9a" stroke-width="1"><path d="M.7 3.700h4.600v8.600H.7zM5.300 7.700h4.600v4.600H5.300zM.7 7.700h4.600"/><rect x="7.600" y=".7" width="4.400" height="4.400"/></svg>
  <svg class="abs" style="left:106.700px;top:7px" width="11" height="10.500" viewBox="0 0 12 12" fill="none" stroke="#9a9a9a" stroke-width="1"><path d="M.6.600h8.800l2 2v8.800H.6z"/><path d="M3 .6v3.600h5.400V.6M.6 7.200h6.800v4.200"/></svg>
  <svg class="abs" style="left:129.800px;top:7.400px" width="12.300" height="9" viewBox="0 0 15 11"><path d="M.4 5.600h10.500c.4-1.300 1.400-1.900 2.700-1.700.6.100 1 .4 1.300.8-.6.300-1.500.5-2.300.4-.6 3-2.800 5.400-6.800 5.400C2.500 10.500.6 8.600.4 5.600z" fill="#9a9a9a"/><path d="M2 3.600h1.700v1.700H2zM4 3.600h1.700v1.700H4zM6 3.600h1.700v1.700H6zM4 1.600h1.700v1.700H4zM6 1.600h1.700v1.700H6zM8 3.600h1.700v1.700H8zM6-.2h1.700v1.500H6z" fill="#9a9a9a"/></svg>
</div>
<div id="explorer" class="abs">
  <div class="abs" style="left:15.300px;top:8.300px;font-size:8.600px;line-height:12px;color:#d0d0d0;white-space:nowrap">资源管理器</div>
  <div class="abs" style="left:128.500px;top:7.300px;font-size:11px;line-height:12px;color:#d0d0d0;letter-spacing:.6px;font-weight:700">···</div>
  <div class="hdr" style="top:27.500px"><i class="abs" style="left:6.300px;top:5.600px;border:3px solid transparent;border-left:4.400px solid #c5c5c5;border-right:0"></i><span class="abs" style="left:15.300px;top:.4px;white-space:nowrap">打开的编辑器</span></div>
  <div class="hdr" style="top:44.500px"><i class="abs" style="left:5.200px;top:6.800px;border:3px solid transparent;border-top:4.400px solid #c5c5c5;border-bottom:0"></i><span class="abs" style="left:15.300px;top:-.4px;white-space:nowrap;font-size:8.800px;letter-spacing:0">MP-WEIXIN</span></div>
  <div class="abs" style="left:22px;top:180px;width:1px;height:52px;background:#4a4a4a"></div>
  <div class="row" style="top:61.5px"><i class="tw r" style="left:16.5px"></i><svg class="ic" style="left:27.0px" width="11" height="9" viewBox="0 0 11 9"><path d="M.8 0h3.100l1.100 1.300h5.200c.4 0 .8.400.8.800v5.700c0 .4-.4.800-.8.800H.8C.4 8.600 0 8.200 0 7.800V.8C0 .4.400 0 .8 0z" fill="#90a4ae"/><rect x="4" y="3.300" width="5.800" height="4" rx=".6" fill="#b0bec5" opacity=".85"/><path d="M5 4.500h3.800M5 6h3.800" stroke="#78909c" stroke-width=".6"/></svg><span class="tx" style="left:43.0px">common</span></div>
  <div class="row" style="top:78.54px"><i class="tw r" style="left:16.5px"></i><svg class="ic" style="left:27.0px" width="11" height="9" viewBox="0 0 11 9"><path d="M.8 0h3.100l1.100 1.300h5.200c.4 0 .8.400.8.800v5.700c0 .4-.4.800-.8.800H.8C.4 8.600 0 8.200 0 7.800V.8C0 .4.400 0 .8 0z" fill="#c0ca33"/><path d="M5.400 3.200h2v2h-2zM8 3.200h2v2H8zM5.400 5.800h2v2h-2zM8 5.800h2v2H8z" fill="#3a3f10"/></svg><span class="tx" style="left:43.0px">components</span></div>
  <div class="row" style="top:95.58px"><i class="tw r" style="left:16.5px"></i><svg class="ic" style="left:27.0px" width="11" height="9" viewBox="0 0 11 9"><path d="M.8 0h3.100l1.100 1.300h5.200c.4 0 .8.400.8.800v5.700c0 .4-.4.800-.8.800H.8C.4 8.600 0 8.200 0 7.800V.8C0 .4.400 0 .8 0z" fill="#ff5a36"/><rect x="5" y="3" width="5.600" height="5.600" rx=".6" fill="#ffccbc"/><path d="M6.200 5.800l1.600-1.400 1.600 1.400M6.800 5.600v1.800h2V5.600" stroke="#e64a19" stroke-width=".6" fill="none"/></svg><span class="tx" style="left:43.0px">pages</span></div>
  <div class="row" style="top:112.62px"><i class="tw d" style="left:15.5px"></i><svg class="ic" style="left:27.0px" width="11" height="9" viewBox="0 0 11 9"><path d="M.4 8.300V1.200c0-.4.300-.7.700-.7h2.800l1 1.200h4.400c.4 0 .7.300.7.700v1H2.600L.8 8.300z" fill="none" stroke="#f9b21c" stroke-width=".9"/><path d="M2.500 3.600h8.300L9.300 8.500H.7z" fill="#f9b21c"/><rect x="5.400" y="4" width="5.200" height="4.400" rx=".5" fill="#fff3c4"/><path d="M6.200 5.200h3.600M6.200 6.400h3.600" stroke="#c79100" stroke-width=".6"/></svg><span class="tx" style="left:43.0px">static</span></div>
  <div class="row" style="top:129.66px"><i class="tw r" style="left:22.7px"></i><svg class="ic" style="left:33.2px" width="11" height="9" viewBox="0 0 11 9"><path d="M.8 0h3.100l1.100 1.300h5.200c.4 0 .8.400.8.800v5.700c0 .4-.4.800-.8.800H.8C.4 8.600 0 8.200 0 7.800V.8C0 .4.400 0 .8 0z" fill="#42a5f5"/><circle cx="7.800" cy="5.800" r="2.900" fill="#bbdefb"/><path d="M6.200 5h3.200M6.200 6.500h3.200" stroke="#1976d2" stroke-width=".7"/></svg><span class="tx" style="left:49.2px">css</span></div>
  <div class="row" style="top:146.7px"><i class="tw r" style="left:22.7px"></i><svg class="ic" style="left:33.2px" width="11" height="9" viewBox="0 0 11 9"><path d="M.8 0h3.100l1.100 1.300h5.200c.4 0 .8.400.8.800v5.700c0 .4-.4.800-.8.800H.8C.4 8.600 0 8.200 0 7.800V.8C0 .4.400 0 .8 0z" fill="#26a69a"/><rect x="5" y="3.300" width="5.600" height="5.200" rx=".6" fill="#b2dfdb"/><path d="M5.600 7.800l1.700-2.200 1.200 1.400.8-.8 1 1.600z" fill="#00695c"/><circle cx="9.200" cy="4.600" r=".7" fill="#00695c"/></svg><span class="tx" style="left:49.2px">img</span></div>
  <div class="row" style="top:163.74px"><i class="tw d" style="left:21.7px"></i><svg class="ic" style="left:33.2px" width="11" height="9" viewBox="0 0 11 9"><path d="M.4 8.300V1.200c0-.4.300-.7.700-.7h2.800l1 1.200h4.400c.4 0 .7.300.7.700v1H2.600L.8 8.300z" fill="none" stroke="#fbc02d" stroke-width=".9"/><path d="M2.500 3.600h8.300L9.300 8.500H.7z" fill="#fbc02d"/><text x="5.600" y="8.400" font-family="Liberation Sans,sans-serif" font-weight="700" font-size="4.400" fill="#6b5200">JS</text></svg><span class="tx" style="left:49.2px">js</span></div>
  <div class="row" style="top:180.78px"><span class="jsi" style="left:39.4px;top:3.500px"></span><span class="tx" style="left:55.4px">common.js</span></div>
  <div class="row" style="top:197.82px;background:#3b3b3b"><span class="jsi" style="left:39.4px;top:3.500px"></span><span class="tx" style="left:55.4px">weCropper.js</span></div>
  <div class="row" style="top:214.86px"><span class="jsi" style="left:39.4px;top:3.500px"></span><span class="tx" style="left:55.4px">wxpay.js</span></div>
  <div class="row" style="top:231.9px"><span class="jsi" style="left:27.0px;top:3.500px"></span><span class="tx" style="left:43.0px">app.js</span></div>
  <div class="row" style="top:248.94px"><svg class="ic" style="left:26.5px;top:3.800px" width="12" height="10" viewBox="0 0 12 10" fill="none" stroke="#f0a92e" stroke-width="1.100"><path d="M3.200.600C2 .6 1.800 1.200 1.800 2.200v1.400c0 .8-.4 1.200-1.200 1.400.8.200 1.200.6 1.200 1.400v1.400c0 1 .2 1.600 1.400 1.600M8.800.600c1.200 0 1.400.6 1.400 1.600v1.400c0 .8.400 1.200 1.200 1.400-.8.200-1.200.6-1.200 1.400v1.400c0 1-.2 1.600-1.400 1.600"/><path d="M4.600 7h1M6.600 7h1" stroke-width="1.200"/></svg><span class="tx" style="left:43.0px">app.json</span></div>
  <div class="row" style="top:265.98px"><svg class="ic" width="11" height="10" viewBox="0 0 11 10" style="top:3.500px;left:27.0px"><path d="M1.200 0h9.400L9.200 8.300 5.400 10 2.200 8.700l.3-1.800 2.900 1.100L7.600 7l.4-2.200H1.700l.3-1.700h6.300l.3-1.400H.9z" fill="#42a5f5"/></svg><span class="tx" style="left:43.0px">app.wxss</span></div>
  <div class="row" style="top:283.02px"><svg class="ic" style="left:26.5px;top:3.800px" width="12" height="10" viewBox="0 0 12 10" fill="none" stroke="#f0a92e" stroke-width="1.100"><path d="M3.200.600C2 .6 1.800 1.200 1.800 2.200v1.400c0 .8-.4 1.200-1.200 1.400.8.200 1.200.6 1.200 1.400v1.400c0 1 .2 1.600 1.400 1.600M8.800.600c1.200 0 1.400.6 1.400 1.600v1.400c0 .8.400 1.200 1.200 1.400-.8.200-1.200.6-1.200 1.400v1.400c0 1-.2 1.600-1.400 1.600"/><path d="M4.600 7h1M6.600 7h1" stroke-width="1.200"/></svg><span class="tx" style="left:43.0px">project.config.json</span></div>
  <div class="row" style="top:300.06px"><svg class="ic" style="left:26.5px;top:3.800px" width="12" height="10" viewBox="0 0 12 10" fill="none" stroke="#f0a92e" stroke-width="1.100"><path d="M3.200.600C2 .6 1.800 1.200 1.800 2.200v1.400c0 .8-.4 1.200-1.200 1.400.8.200 1.200.6 1.200 1.400v1.400c0 1 .2 1.600 1.400 1.600M8.800.600c1.200 0 1.400.6 1.400 1.600v1.400c0 .8.400 1.200 1.200 1.400-.8.200-1.200.6-1.200 1.400v1.400c0 1-.2 1.600-1.400 1.600"/><path d="M4.600 7h1M6.600 7h1" stroke-width="1.200"/></svg><span class="tx" style="left:43.0px">sitemap.json</span></div>
  <div class="row" style="top:317.1px"><svg class="ic" style="left:26.5px;top:3.800px" width="12" height="10" viewBox="0 0 12 10" fill="none" stroke="#f0a92e" stroke-width="1.100"><path d="M3.200.600C2 .6 1.800 1.200 1.800 2.200v1.400c0 .8-.4 1.200-1.200 1.400.8.200 1.200.6 1.200 1.400v1.400c0 1 .2 1.600 1.400 1.600M8.800.600c1.200 0 1.400.6 1.400 1.600v1.400c0 .8.400 1.200 1.200 1.400-.8.200-1.200.6-1.200 1.400v1.400c0 1-.2 1.600-1.400 1.600"/><path d="M4.600 7h1M6.600 7h1" stroke-width="1.200"/></svg><span class="tx" style="left:43.0px">sitemap13.json</span></div>
  <div class="row" style="top:334.14px"><svg class="ic" style="left:26.5px;top:3.800px" width="12" height="10" viewBox="0 0 12 10" fill="none" stroke="#f0a92e" stroke-width="1.100"><path d="M3.200.600C2 .6 1.800 1.200 1.800 2.200v1.400c0 .8-.4 1.200-1.200 1.400.8.200 1.200.6 1.200 1.400v1.400c0 1 .2 1.600 1.400 1.600M8.800.600c1.200 0 1.400.6 1.400 1.600v1.400c0 .8.400 1.200 1.200 1.400-.8.200-1.200.6-1.200 1.400v1.400c0 1-.2 1.600-1.400 1.600"/><path d="M4.600 7h1M6.600 7h1" stroke-width="1.200"/></svg><span class="tx" style="left:43.0px">sitemap18.json</span></div>
  <div class="row" style="top:351.18px"><svg class="ic" style="left:26.5px;top:3.800px" width="12" height="10" viewBox="0 0 12 10" fill="none" stroke="#f0a92e" stroke-width="1.100"><path d="M3.200.600C2 .6 1.800 1.200 1.800 2.200v1.400c0 .8-.4 1.200-1.200 1.400.8.200 1.200.6 1.200 1.400v1.400c0 1 .2 1.600 1.400 1.600M8.800.600c1.200 0 1.400.6 1.400 1.600v1.400c0 .8.400 1.200 1.200 1.400-.8.200-1.200.6-1.200 1.400v1.400c0 1-.2 1.600-1.400 1.600"/><path d="M4.600 7h1M6.600 7h1" stroke-width="1.200"/></svg><span class="tx" style="left:43.0px">sitemap30.json</span></div>
  <div class="row" style="top:368.22px"><svg class="ic" style="left:26.5px;top:3.800px" width="12" height="10" viewBox="0 0 12 10" fill="none" stroke="#f0a92e" stroke-width="1.100"><path d="M3.200.600C2 .6 1.800 1.200 1.800 2.200v1.400c0 .8-.4 1.200-1.200 1.400.8.200 1.200.6 1.200 1.400v1.400c0 1 .2 1.600 1.400 1.600M8.800.600c1.200 0 1.400.6 1.400 1.600v1.400c0 .8.400 1.200 1.200 1.400-.8.200-1.200.6-1.200 1.400v1.400c0 1-.2 1.600-1.400 1.600"/><path d="M4.600 7h1M6.600 7h1" stroke-width="1.200"/></svg><span class="tx" style="left:43.0px">sitemap34.json</span></div>
  <div class="row" style="top:385.26px"><svg class="ic" style="left:26.5px;top:3.800px" width="12" height="10" viewBox="0 0 12 10" fill="none" stroke="#f0a92e" stroke-width="1.100"><path d="M3.200.600C2 .6 1.800 1.200 1.800 2.200v1.400c0 .8-.4 1.200-1.200 1.400.8.200 1.200.6 1.200 1.400v1.400c0 1 .2 1.600 1.400 1.600M8.800.600c1.200 0 1.400.6 1.400 1.600v1.400c0 .8.400 1.200 1.200 1.400-.8.200-1.200.6-1.200 1.400v1.400c0 1-.2 1.600-1.400 1.600"/><path d="M4.600 7h1M6.600 7h1" stroke-width="1.200"/></svg><span class="tx" style="left:43.0px">sitemap51.json</span></div>
  <div class="row" style="top:402.3px"><svg class="ic" style="left:26.5px;top:3.800px" width="12" height="10" viewBox="0 0 12 10" fill="none" stroke="#f0a92e" stroke-width="1.100"><path d="M3.200.600C2 .6 1.800 1.200 1.800 2.200v1.400c0 .8-.4 1.200-1.200 1.400.8.200 1.200.6 1.200 1.400v1.400c0 1 .2 1.600 1.400 1.600M8.800.600c1.200 0 1.400.6 1.400 1.600v1.400c0 .8.400 1.200 1.200 1.400-.8.200-1.200.6-1.200 1.400v1.400c0 1-.2 1.600-1.400 1.600"/><path d="M4.600 7h1M6.600 7h1" stroke-width="1.200"/></svg><span class="tx" style="left:43.0px">sitemap52.json</span></div>
  <div class="row" style="top:419.34px"><svg class="ic" style="left:26.5px;top:3.800px" width="12" height="10" viewBox="0 0 12 10" fill="none" stroke="#f0a92e" stroke-width="1.100"><path d="M3.200.600C2 .6 1.800 1.200 1.800 2.200v1.400c0 .8-.4 1.200-1.200 1.400.8.200 1.200.6 1.200 1.400v1.400c0 1 .2 1.600 1.400 1.600M8.800.600c1.200 0 1.400.6 1.400 1.600v1.400c0 .8.400 1.200 1.200 1.400-.8.200-1.200.6-1.200 1.400v1.400c0 1-.2 1.600-1.400 1.600"/><path d="M4.600 7h1M6.600 7h1" stroke-width="1.200"/></svg><span class="tx" style="left:43.0px">sitemap66.json</span></div>
  <div class="row" style="top:436.38px"><svg class="ic" style="left:26.5px;top:3.800px" width="12" height="10" viewBox="0 0 12 10" fill="none" stroke="#f0a92e" stroke-width="1.100"><path d="M3.200.600C2 .6 1.800 1.200 1.800 2.200v1.400c0 .8-.4 1.200-1.200 1.400.8.200 1.200.6 1.200 1.400v1.400c0 1 .2 1.600 1.400 1.600M8.800.600c1.200 0 1.400.6 1.400 1.600v1.400c0 .8.400 1.200 1.200 1.400-.8.200-1.200.6-1.200 1.400v1.400c0 1-.2 1.600-1.400 1.600"/><path d="M4.600 7h1M6.600 7h1" stroke-width="1.200"/></svg><span class="tx" style="left:43.0px">sitemap75.json</span></div>
  <div class="row" style="top:453.42px"><svg class="ic" style="left:26.5px;top:3.800px" width="12" height="10" viewBox="0 0 12 10" fill="none" stroke="#f0a92e" stroke-width="1.100"><path d="M3.200.600C2 .6 1.800 1.200 1.800 2.200v1.400c0 .8-.4 1.200-1.200 1.400.8.200 1.200.6 1.200 1.400v1.400c0 1 .2 1.600 1.400 1.600M8.800.600c1.200 0 1.400.6 1.400 1.600v1.400c0 .8.400 1.200 1.200 1.400-.8.200-1.200.6-1.200 1.400v1.400c0 1-.2 1.600-1.400 1.600"/><path d="M4.600 7h1M6.600 7h1" stroke-width="1.200"/></svg><span class="tx" style="left:43.0px">sitemap85.json</span></div>
</div>
<!-- EDITOR -->
<div id="tabs" class="abs">
  <div class="tab" style="left:0;width:95px;background:#383838;color:#a8a8a8"><span class="jsi" style="left:10px;top:7px"></span><span class="abs" style="left:25px;top:1.100px">common.js</span></div>
  <div class="tab" style="left:95px;width:104px;background:#2e2e2e;color:#fff;font-style:italic"><span class="jsi" style="left:10.500px;top:7px;font-style:normal"></span><span class="abs" style="left:25.500px;top:1.100px;letter-spacing:-.2px">weCropper.js</span>
    <svg class="abs" style="left:87.500px;top:8px" width="7" height="7" viewBox="0 0 7 7" stroke="#fff" stroke-width="1" fill="none"><path d="M.5.500l6 6M6.500.500l-6 6"/></svg></div>
</div>
<div id="editor" class="abs">
  <!-- breadcrumb -->
  <svg class="abs" style="left:7.500px;top:5.500px" width="10" height="8" viewBox="0 0 10 8" stroke="#9a9a9a" stroke-width="1" fill="none"><path d="M2 .5h8M2 2.800h8M2 5.100h8M2 7.400h8M0 .5h1M0 2.800h1M0 5.100h1M0 7.400h1"/></svg>
  <svg class="abs" style="left:31.500px;top:4px" width="8" height="10" viewBox="0 0 8 10" stroke="#b8b8b8" stroke-width="1.100" fill="none"><path d="M.8.600h6.400v8.600L4 6.600.8 9.200z"/></svg>
  <svg class="abs" style="left:54px;top:5px" width="10" height="8" viewBox="0 0 10 8" stroke="#b0b0b0" stroke-width="1" fill="none"><path d="M10 4H1M4.200.600L.8 4l3.400 3.400"/></svg>
  <svg class="abs" style="left:75px;top:5px" width="10" height="8" viewBox="0 0 10 8" stroke="#555" stroke-width="1" fill="none"><path d="M0 4h9M5.800.600L9.200 4 5.800 7.400"/></svg>
  <div class="bc" style="left:98px">static</div>
  <svg class="abs" style="left:124.500px;top:5.500px" width="5" height="8" viewBox="0 0 5 8" stroke="#999" stroke-width="1" fill="none"><path d="M.8.800L4 4 .8 7.200"/></svg>
  <div class="bc" style="left:133.500px">js</div>
  <svg class="abs" style="left:144px;top:5.500px" width="5" height="8" viewBox="0 0 5 8" stroke="#999" stroke-width="1" fill="none"><path d="M.8.800L4 4 .8 7.200"/></svg>
  <span class="jsi" style="left:155px;top:4px"></span>
  <div class="bc" style="left:170px">weCropper.js</div>
  <svg class="abs" style="left:232px;top:5.500px" width="5" height="8" viewBox="0 0 5 8" stroke="#999" stroke-width="1" fill="none"><path d="M.8.800L4 4 .8 7.200"/></svg>
  <div class="bc" style="left:241px;top:1.500px;letter-spacing:.2px">...</div>
  <div class="abs" style="left:0;top:17px;width:2.500px;height:196px;background:#383838"></div>
  <div class="ig" style="left:55.1px;top:36.3px;height:55.7px"></div>
  <div class="ig" style="left:65.3px;top:54.9px;height:37.1px"></div>
  <div class="ig" style="left:55.1px;top:110.5px;height:315.2px"></div>
  <div class="ig" style="left:65.3px;top:166.2px;height:37.1px"></div>
  <div class="ig" style="left:65.3px;top:277.4px;height:18.6px"></div>
  <div class="ig" style="left:65.3px;top:351.7px;height:74.0px"></div>
  <div class="ig" style="left:75.5px;top:370.2px;height:18.6px"></div>
  <div class="abs" style="left:54.600px;top:19.95px;width:5.600px;height:14.500px;border:1px solid #777;background:#353535"></div>
  <div class="ln" style="top:17.75px">1</div><svg class="cv" style="top:22.95px" viewBox="0 0 7 5" stroke="#c8c8c8" stroke-width="1.100" fill="none"><path d="M.5.700l3 3.300 3-3.300"/></svg><div class="cl" style="top:17.75px"><span class="by">(</span><span class="y">function</span><span class="bp">(</span><span class="s">global</span><span class="sc">,</span> <span class="s">factory</span><span class="bp">)</span> <span class="bp">{</span></div>
  <div class="ln" style="top:36.3px">2</div><div class="cl" style="top:36.3px">  <span class="y">typeof</span> <span class="p">exports</span> <span class="o">===</span> <span class="s">'object'</span> <span class="y">&amp;&amp;</span> <span class="y">typeof</span> <span class="p">module</span> <span class="s">!==</span> <span class="s">'undefined'</span> <span class="y">?</span> <span class="p">module</span><span class="g">.</span><span class="p">exports</span> <span class="o">=</span> <span class="f">factory</span><span class="bb">()</span> <span class="y">:</span></div>
  <div class="ln" style="top:54.85px">3</div><div class="cl" style="top:54.85px">    <span class="y">typeof</span> <span class="g">define</span> <span class="o">===</span> <span class="s">'function'</span> <span class="y">&amp;&amp;</span> <span class="g">define.amd</span> <span class="f">?</span> <span class="f">define</span><span class="bb">(</span><span class="g">factory</span><span class="bb">)</span> <span class="y">:</span></div>
  <div class="ln" style="top:73.4px">4</div><div class="cl" style="top:73.4px">    <span class="bb">(</span><span class="g">global.weCropper</span> <span class="o">=</span> <span class="by">factory</span><span class="by">()</span><span class="bb">)</span><span class="sc">;</span></div>
  <div class="ln" style="top:91.95px">5</div><svg class="cv" style="top:97.15px" viewBox="0 0 7 5" stroke="#c8c8c8" stroke-width="1.100" fill="none"><path d="M.5.700l3 3.300 3-3.300"/></svg><div class="cl" style="top:91.95px"><span class="bp">}</span><span class="bp">(</span><span class="t">this</span><span class="sc">,</span> <span class="bb">(</span><span class="y">function</span><span class="by">()</span> <span class="by">{</span></div>
  <div class="ln" style="top:110.5px">6</div><div class="cl" style="top:110.5px">  <span class="s">'use strict'</span><span class="sc">;</span></div>
  <div class="ln" style="top:129.05px">7</div><div class="cl" style="top:129.05px"></div>
  <div class="ln" style="top:147.6px">8</div><svg class="cv" style="top:152.8px" viewBox="0 0 7 5" stroke="#c8c8c8" stroke-width="1.100" fill="none"><path d="M.5.700l3 3.300 3-3.300"/></svg><div class="cl" style="top:147.6px">  <span class="c">/**</span></div>
  <div class="ln" style="top:166.15px">9</div><div class="cl" style="top:166.15px">  <span class="c"> * Created by sail on 2017/6/11.</span></div>
  <div class="ln" style="top:184.7px">10</div><div class="cl" style="top:184.7px">  <span class="c"> */</span></div>
  <div class="ln" style="top:203.25px">11</div><div class="cl" style="top:203.25px">  <span class="y">var</span> <span class="g">device</span> <span class="o">=</span> <span class="y">void</span> <span class="s">0</span><span class="sc">;</span></div>
  <div class="ln" style="top:221.8px">12</div><div class="cl" style="top:221.8px">  <span class="y">var</span> <span class="g">TOUCH_STATE</span> <span class="o">=</span> <span class="bp">[</span><span class="s">'touchstarted'</span><span class="sc">,</span> <span class="s">'touchmoved'</span><span class="sc">,</span> <span class="s">'touchended'</span><span class="bp">]</span><span class="sc">;</span></div>
  <div class="ln" style="top:240.35px">13</div><div class="cl" style="top:240.35px"></div>
  <div class="ln" style="top:258.9px">14</div><svg class="cv" style="top:264.1px" viewBox="0 0 7 5" stroke="#c8c8c8" stroke-width="1.100" fill="none"><path d="M.5.700l3 3.300 3-3.300"/></svg><div class="cl" style="top:258.9px">  <span class="y">function</span> <span class="f">firstLetterUpper</span><span class="bp">(</span><span class="s">str</span><span class="bp">)</span> <span class="bp">{</span></div>
  <div class="ln" style="top:277.45px">15</div><div class="cl" style="top:277.45px">    <span class="t">return</span> <span class="g">str</span><span class="g">.</span><span class="f">charAt</span><span class="bb">(</span><span class="s">0</span><span class="bb">)</span><span class="g">.</span><span class="f">toUpperCase</span><span class="bb">()</span> <span class="y">+</span> <span class="g">str</span><span class="g">.</span><span class="f">slice</span><span class="bb">(</span><span class="s">1</span><span class="bb">)</span><span class="sc">;</span></div>
  <div class="ln" style="top:296.0px">16</div><div class="cl" style="top:296.0px">  <span class="bp">}</span></div>
  <div class="ln" style="top:314.55px">17</div><div class="cl" style="top:314.55px"></div>
  <div class="ln" style="top:333.1px">18</div><svg class="cv" style="top:338.3px" viewBox="0 0 7 5" stroke="#c8c8c8" stroke-width="1.100" fill="none"><path d="M.5.700l3 3.300 3-3.300"/></svg><div class="cl" style="top:333.1px">  <span class="y">function</span> <span class="f">setTouchState</span><span class="bp">(</span><span class="s">instance</span><span class="bp">)</span> <span class="bp">{</span></div>
  <div class="ln" style="top:351.65px">19</div><svg class="cv" style="top:356.85px" viewBox="0 0 7 5" stroke="#c8c8c8" stroke-width="1.100" fill="none"><path d="M.5.700l3 3.300 3-3.300"/></svg><div class="cl" style="top:351.65px">    <span class="t">for</span> <span class="bb">(</span><span class="y">var</span> <span class="g">_len</span> <span class="o">=</span> <span class="t">arguments</span><span class="g">.length,</span> <span class="g">arg</span> <span class="o">=</span> <span class="t">Array</span><span class="by">(</span><span class="g">_len</span> <span class="y">&gt;</span> <span class="s">1</span> <span class="y">?</span> <span class="g">_len</span> <span class="o">-</span> <span class="s">1</span> <span class="y">:</span> <span class="s">0</span><span class="by">)</span><span class="g">,</span> <span class="g">_key</span> <span class="o">=</span> <span class="s">1</span><span class="sc">;</span> <span class="g">_key</span> <span class="y">&lt;</span> <span class="g">_len</span><span class="sc">;</span> <span class="g">_key</span><span class="y">++</span><span class="bb">)</span> <span class="bb">{</span></div>
  <div class="ln" style="top:370.2px">20</div><div class="cl" style="top:370.2px">      <span class="g">arg</span><span class="by">[</span><span class="g">_key</span> <span class="o">-</span> <span class="s">1</span><span class="by">]</span> <span class="o">=</span> <span class="t">arguments</span><span class="by">[</span><span class="g">_key</span><span class="by">]</span><span class="sc">;</span></div>
  <div class="ln" style="top:388.75px">21</div><div class="cl" style="top:388.75px">    <span class="bb">}</span></div>
  <div class="ln" style="top:407.3px">22</div><div class="cl" style="top:407.3px"></div>
  <div class="abs" style="left:7.600px;top:395.4px;width:4.800px;height:4.800px;border-radius:50%;background:#8a2a2a;margin:.3px"></div>
</div>
<!-- DEBUGGER -->
<div id="dbg" class="abs">
  <div class="abs cj" style="left:15.9px;top:6.2px;font-size:8.800px;line-height:12px;color:#e8e8e8;white-space:nowrap">调试器</div>
  <div class="abs" style="left:15.9px;top:21.8px;width:26.400px;height:1px;background:#e0e0e0"></div>
  <div class="abs" style="left:47.6px;top:5.8px;width:25.600px;height:12.800px;border-radius:6.400px;background:#4c4c4c;color:#e4e4e4;font-size:8.800px;line-height:12.800px;text-align:center;letter-spacing:-.1px">9, 11</div>
  <div class="abs cj" style="left:88.7px;top:6.2px;font-size:8.800px;line-height:12px;color:#8a8a8a;white-space:nowrap">问题</div>
  <div class="abs cj" style="left:121.3px;top:6.2px;font-size:8.800px;line-height:12px;color:#8a8a8a;white-space:nowrap">输出</div>
  <div class="abs cj" style="left:153.9px;top:6.2px;font-size:8.800px;line-height:12px;color:#8a8a8a;white-space:nowrap">终端</div>
  <div class="abs" style="left:0;top:22.8px;width:678px;height:20.600px;background:#333;border-bottom:1px solid #444"></div>
  <div class="abs" style="left:175.7px;top:22.8px;width:53.300px;height:20.600px;background:#000"></div>
  <svg class="abs" style="left:8px;top:28px" width="12" height="11" viewBox="0 0 12 11" fill="none" stroke="#9a9a9a" stroke-width="1"><path d="M9.500 4V.6H.6v8h4" stroke-dasharray="none"/><path d="M5.800 4.200l1.900 6 1.100-2.300 2.300-1.100z" fill="#9a9a9a" stroke-width=".6"/></svg>
  <div class="vd" style="left:27px;top:26.5px;height:13px"></div>
  <div class="t" style="left:41px;top:27.9px;color:#d8d8d8">Wxml</div>
  <div class="t" style="left:83px;top:27.9px;color:#d8d8d8">Console</div>
  <div class="t" style="left:134px;top:27.9px;color:#d8d8d8">Sources</div>
  <div class="t" style="left:184.5px;top:27.9px;color:#fff">Network</div>
  <div class="t" style="left:238px;top:27.9px;color:#d8d8d8">Memory</div>
  <div class="t" style="left:290.6px;top:27.9px;color:#d8d8d8">AppData</div>
  <div class="t" style="left:344px;top:27.9px;color:#d8d8d8">Storage</div>
  <div class="t" style="left:394.4px;top:27.9px;color:#d8d8d8">Security</div>
  <div class="t" style="left:452.5px;top:27.9px;color:#d8d8d8">Sensor</div>
  <div class="t" style="left:498px;top:27.9px;color:#d8d8d8">Mock</div>
  <div class="t" style="left:539px;top:27.9px;color:#d8d8d8">Audits</div>
  <div class="t" style="left:583.5px;top:27.9px;color:#d8d8d8">Trace</div>
  <div class="t" style="left:622.5px;top:27.9px;color:#d8d8d8">Vulnerability</div>
  <div class="abs" style="left:0;top:43.4px;width:678px;height:20.400px;background:#2e2e2e;border-bottom:1px solid #444"></div>
  <div class="abs" style="left:8.1px;top:49.4px;width:9.200px;height:9.200px;border-radius:50%;background:#f24040"></div>
  <svg class="abs" style="left:29.8px;top:49px" width="10" height="10" viewBox="0 0 10 10" fill="none" stroke="#a8a8a8" stroke-width="1.200"><circle cx="5" cy="5" r="4.200"/><path d="M2.100 2.100l5.800 5.800"/></svg>
  <div class="vd" style="left:49px;top:47px;height:13px"></div>
  <svg class="abs" style="left:57.5px;top:49.5px" width="11" height="10" viewBox="0 0 11 10" fill="none" stroke="#3a96e8" stroke-width="1.200"><path d="M.8.700h9.400L6.600 5v4.300H4.400V5z"/></svg>
  <svg class="abs" style="left:79.4px;top:49px" width="11" height="11" viewBox="0 0 11 11" fill="none" stroke="#a8a8a8" stroke-width="1.200"><circle cx="4.200" cy="4.200" r="3.300"/><path d="M6.600 6.600l3.800 3.800"/></svg>
  <div class="vd" style="left:99.4px;top:47px;height:13px"></div>
  <div class="cb" style="left:108px;top:49.8px"></div>
  <div class="t" style="left:121.8px;top:48.6px">Preserve log</div>
  <div class="cb" style="left:180.2px;top:49.8px"></div>
  <div class="t" style="left:194.4px;top:48.6px">Disable cache</div>
  <div class="vd" style="left:257.3px;top:47px;height:13px"></div>
  <div class="t" style="left:265.8px;top:48.6px">Online</div>
  <i class="abs" style="left:313.8px;top:52px;border:2.600px solid transparent;border-top:4px solid #a0a0a0;border-bottom:0"></i>
  <div class="vd" style="left:328px;top:47px;height:13px"></div>
  <svg class="abs" style="left:339px;top:49px" width="8" height="10" viewBox="0 0 8 10" fill="#a8a8a8"><path d="M4 0L.2 4h2.300v3.200h3V4h2.300zM.3 8.600h7.400v1.200H.3z"/></svg>
  <svg class="abs" style="left:360.4px;top:49px" width="8" height="10" viewBox="0 0 8 10" fill="#a8a8a8"><path d="M4 7.200L.2 3.200h2.300V0h3v3.200h2.300zM.3 8.600h7.400v1.200H.3z"/></svg>
  <div class="abs" style="left:0;top:64.4px;width:678px;height:19px;background:#2e2e2e;border-bottom:1px solid #444"></div>
  <div class="abs" style="left:0;top:65.4px;width:130px;height:17px;background:#282828"></div>
  <div class="t" style="left:6px;top:69.6px;color:#c8c8c8">Filter</div>
  <div class="cb" style="left:139.7px;top:69.2px"></div>
  <div class="t" style="left:154.4px;top:69.1px">Hide data URLs</div>
  <div class="abs" style="left:221.3px;top:66.5px;width:14.200px;height:15px;border-radius:4px;background:#5a5a5a"></div>
  <div class="t" style="left:223.6px;top:70.0px;color:#9a9a9a">All</div>
  <div class="vd" style="left:240px;top:67.5px;height:12px"></div>
  <div class="t" style="left:245.4px;top:70.1px">Cloud</div>
  <div class="t" style="left:277.7px;top:70.1px;letter-spacing:-.5px">XHR</div>
  <div class="t" style="left:303.2px;top:70.1px;letter-spacing:-.5px">JS</div>
  <div class="t" style="left:318.8px;top:70.1px;letter-spacing:-.5px">CSS</div>
  <div class="t" style="left:342.3px;top:70.1px">Img</div>
  <div class="t" style="left:366.3px;top:70.1px">Media</div>
  <div class="t" style="left:399.8px;top:70.1px">Font</div>
  <div class="t" style="left:425.8px;top:70.1px">Doc</div>
  <div class="t" style="left:449.4px;top:70.1px">WS</div>
  <div class="t" style="left:471.2px;top:70.1px">Manifest</div>
  <div class="t" style="left:514.3px;top:70.1px">Other</div>
  <div class="cb" style="left:550px;top:69.2px"></div>
  <div class="t" style="left:563.3px;top:69.1px">Has blocked cookies</div>
  <div class="cb" style="left:654.5px;top:69.2px"></div>
  <div class="t" style="left:669px;top:69.1px">Blocked Requests</div>
  <div class="abs" style="left:0;top:83.4px;width:678px;height:62.200px;background:#242424"></div>
  <div class="abs" style="left:0;top:145.6px;width:678px;height:4.400px;background:#2e2e2e;border-top:1px solid #3a3a3a;border-bottom:1px solid #3a3a3a"></div>
  <div class="abs" style="left:60.8px;top:83.4px;width:1px;height:62.200px;background:#3c3c3c"></div><div class="t" style="left:9.8px;width:50px;text-align:right;top:87.1px;font-size:8.200px;color:#ececec;letter-spacing:-.4px">2000 ms</div>
  <div class="abs" style="left:121.9px;top:83.4px;width:1px;height:62.200px;background:#3c3c3c"></div><div class="t" style="left:70.9px;width:50px;text-align:right;top:87.1px;font-size:8.200px;color:#ececec;letter-spacing:-.4px">4000 ms</div>
  <div class="abs" style="left:183.1px;top:83.4px;width:1px;height:62.200px;background:#3c3c3c"></div><div class="t" style="left:132.1px;width:50px;text-align:right;top:87.1px;font-size:8.200px;color:#ececec;letter-spacing:-.4px">6000 ms</div>
  <div class="abs" style="left:244.3px;top:83.4px;width:1px;height:62.200px;background:#3c3c3c"></div><div class="t" style="left:193.3px;width:50px;text-align:right;top:87.1px;font-size:8.200px;color:#ececec;letter-spacing:-.4px">8000 ms</div>
  <div class="abs" style="left:305.5px;top:83.4px;width:1px;height:62.200px;background:#3c3c3c"></div><div class="t" style="left:254.5px;width:50px;text-align:right;top:87.1px;font-size:8.200px;color:#ececec;letter-spacing:-.4px">10000 ms</div>
  <div class="abs" style="left:366.6px;top:83.4px;width:1px;height:62.200px;background:#3c3c3c"></div><div class="t" style="left:315.6px;width:50px;text-align:right;top:87.1px;font-size:8.200px;color:#ececec;letter-spacing:-.4px">12000 ms</div>
  <div class="abs" style="left:427.8px;top:83.4px;width:1px;height:62.200px;background:#3c3c3c"></div><div class="t" style="left:376.8px;width:50px;text-align:right;top:87.1px;font-size:8.200px;color:#ececec;letter-spacing:-.4px">14000 ms</div>
  <div class="abs" style="left:489.0px;top:83.4px;width:1px;height:62.200px;background:#3c3c3c"></div><div class="t" style="left:438.0px;width:50px;text-align:right;top:87.1px;font-size:8.200px;color:#ececec;letter-spacing:-.4px">16000 ms</div>
  <div class="abs" style="left:550.1px;top:83.4px;width:1px;height:62.200px;background:#3c3c3c"></div><div class="t" style="left:499.1px;width:50px;text-align:right;top:87.1px;font-size:8.200px;color:#ececec;letter-spacing:-.4px">18000 ms</div>
  <div class="abs" style="left:611.3px;top:83.4px;width:1px;height:62.200px;background:#3c3c3c"></div><div class="t" style="left:560.3px;width:50px;text-align:right;top:87.1px;font-size:8.200px;color:#ececec;letter-spacing:-.4px">20000 ms</div>
  <div class="abs" style="left:672.5px;top:83.4px;width:1px;height:62.200px;background:#3c3c3c"></div><div class="t" style="left:621.5px;width:50px;text-align:right;top:87.1px;font-size:8.200px;color:#ececec;letter-spacing:-.4px">22000 ms</div>
  <div class="abs" style="left:1.5px;top:85px;width:1px;height:14px;background:#888"></div>
<div class="bar" style="left:3.7px;top:102.7px;width:5.1px;background:#e8e8e8"></div><div class="bar" style="left:8.8px;top:104.9px;width:19.0px;background:#12c05a"></div><div class="bar" style="left:8.8px;top:106.9px;width:1.7px;background:#2a9df4"></div><div class="bar" style="left:8.8px;top:109.5px;width:19.0px;background:#12c05a"></div><div class="bar" style="left:8.8px;top:111.7px;width:1.7px;background:#2a9df4"></div><div class="bar" style="left:8.8px;top:114.1px;width:1.7px;background:#2a9df4"></div><div class="bar" style="left:8.8px;top:116.6px;width:19.0px;background:#12c05a"></div><div class="bar" style="left:1.4px;top:118.8px;width:15.9px;background:#a63cc8"></div><div class="bar" style="left:17.3px;top:118.8px;width:10.5px;background:#12c05a"></div><div class="bar" style="left:32.6px;top:102.7px;width:10.7px;background:#e8e8e8"></div><div class="bar" style="left:43.3px;top:106.9px;width:2.7px;background:#12c05a"></div><div class="bar" style="left:46px;top:106.9px;width:2.5px;background:#2a9df4"></div><div class="bar" style="left:43.3px;top:116.0px;width:2.7px;background:#12c05a"></div><div class="bar" style="left:46px;top:116.0px;width:2.5px;background:#2a9df4"></div><div class="bar" style="left:34.3px;top:121.1px;width:3.7px;background:#a63cc8"></div><div class="bar" style="left:38px;top:121.1px;width:5.5px;background:#12c05a"></div><div class="bar" style="left:43.5px;top:121.1px;width:5.5px;background:#2a9df4"></div><div class="bar" style="left:234.6px;top:118.8px;width:6.5px;background:#12c05a"></div><div class="bar" style="left:246.8px;top:102.7px;width:7.6px;background:#e8e8e8"></div><div class="bar" style="left:246.8px;top:121.1px;width:4.2px;background:#e8e8e8"></div><div class="bar" style="left:251px;top:121.1px;width:6.3px;background:#2a9df4"></div><div class="bar" style="left:250.2px;top:123.1px;width:5.1px;background:#2a9df4"></div><div class="bar" style="left:389px;top:119.0px;width:7.1px;background:#12c05a"></div><div class="bar" style="left:449.4px;top:102.8px;width:5.3px;background:#e8e8e8"></div><div class="bar" style="left:438.6px;top:119.0px;width:9.4px;background:#12c05a"></div><div class="bar" style="left:449.4px;top:121.3px;width:2.6px;background:#e8e8e8"></div><div class="bar" style="left:452px;top:121.3px;width:5px;background:#2a9df4"></div>
  <div class="abs" style="left:0;top:150px;width:678px;height:18px;background:#2e2e2e;border-bottom:1px solid #484848;z-index:2"></div>
  <div class="t" style="left:5px;top:152.2px;z-index:3;color:#f0f0f0;font-size:9.400px">Name</div>
  <div class="nr" style="top:162.7px;background:#2d2d2d"><i style="--c:#6b5a48"></i><span>132</span></div>
  <div class="nr" style="top:178.9px;background:#232323"><i style="--c:#555"></i><span>132</span></div>
  <div class="nr" style="top:195.0px;background:#2d2d2d"><i style="--c:#2f9bf0"></i><span>132</span></div>
  <div class="nr" style="top:211.2px;background:#232323"><i style="--c:#f0a070"></i><span>132</span></div>
  <div class="nr" style="top:227.3px;background:#2d2d2d"><i style="--c:#5a3a30"></i><span>132</span></div>
  <div class="nr" style="top:243.5px;background:#232323"><i style="--c:#806848"></i><span>132</span></div>
  <div class="nr" style="top:259.6px;background:#2d2d2d"><i style="--c:#f8b8c8"></i><span>132</span></div>
  <div class="nr" style="top:275.8px;background:#232323"><i style="--c:#444"></i><span>132</span></div>
  <div class="nr" style="top:291.9px;background:#2d2d2d"><i style="--c:#666"></i><span>132</span></div>
</div>
</body>
</html>
